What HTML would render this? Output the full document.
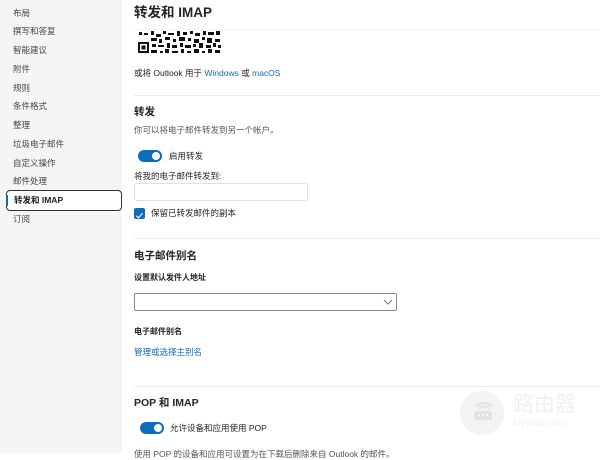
<!DOCTYPE html>
<html><head><meta charset="utf-8"><style>
*{margin:0;padding:0;box-sizing:border-box}
body{width:600px;height:453px;overflow:hidden;background:#fff;font-family:"Liberation Sans","Noto Sans CJK SC",sans-serif;color:#242424;position:relative}
.sb{position:absolute;left:0;top:0;width:122px;height:453px;background:#f5f5f5}
.sb .it{position:absolute;left:13px;font-size:8.5px;color:#444;line-height:12px}
.sb .sel{position:absolute;left:6px;top:190px;width:116px;height:21px;border:1.5px solid #333;border-radius:4px;background:#fff}
.sb .bar{position:absolute;left:6px;top:195px;width:2px;height:11px;background:#0f6cbd}
.t{position:absolute;white-space:nowrap;line-height:12px}
.hr{position:absolute;left:134px;width:466px;height:1px;background:#ececec}
a{color:#0f6cbd;text-decoration:none}
.tog{position:absolute;width:24px;height:12px;border-radius:6px;background:#0f6cbd}
.tog:after{content:"";position:absolute;right:2px;top:2px;width:8px;height:8px;border-radius:50%;background:#fff}
</style></head><body>
<div class="sb">
<div class="it" style="top:7px">布局</div>
<div class="it" style="top:25px">撰写和答复</div>
<div class="it" style="top:44px">智能建议</div>
<div class="it" style="top:63px">附件</div>
<div class="it" style="top:82px">规则</div>
<div class="it" style="top:100px">条件格式</div>
<div class="it" style="top:119px">整理</div>
<div class="it" style="top:138px">垃圾电子邮件</div>
<div class="it" style="top:157px">自定义操作</div>
<div class="it" style="top:175px">邮件处理</div>
<div class="sel"></div><div class="bar"></div>
<div class="it" style="top:194px;left:14px;font-weight:bold;color:#222">转发和 IMAP</div>
<div class="it" style="top:213px">订阅</div>
</div>
<div class="t" style="left:134px;top:5px;font-size:13.5px;font-weight:bold;line-height:16px">转发和 IMAP</div>
<div class="hr" style="top:29px;background:#f3f3f3"></div>
<svg style="position:absolute;left:137px;top:30px" width="86" height="25" viewBox="0 0 86 25">
<rect x="1" y="12" width="11" height="11" fill="#111"/><rect x="3" y="14" width="7" height="7" fill="#fff"/><rect x="4.5" y="15.5" width="4" height="4" fill="#111"/>
<g fill="#111">
<rect x="2" y="2" width="3" height="3"/><rect x="7" y="3" width="4" height="2"/><rect x="14" y="1" width="3" height="4"/><rect x="19" y="4" width="5" height="3"/><rect x="26" y="1" width="3" height="3"/><rect x="31" y="3" width="6" height="2"/><rect x="40" y="1" width="3" height="5"/><rect x="46" y="2" width="4" height="3"/><rect x="53" y="1" width="3" height="3"/><rect x="58" y="3" width="5" height="3"/><rect x="66" y="1" width="3" height="4"/><rect x="71" y="2" width="6" height="3"/><rect x="79" y="1" width="4" height="4"/>
<rect x="14" y="8" width="6" height="3"/><rect x="22" y="9" width="3" height="4"/><rect x="28" y="7" width="5" height="3"/><rect x="36" y="9" width="3" height="3"/><rect x="42" y="7" width="6" height="4"/><rect x="51" y="8" width="3" height="3"/><rect x="57" y="9" width="5" height="4"/><rect x="65" y="7" width="3" height="3"/><rect x="70" y="8" width="5" height="5"/><rect x="78" y="9" width="5" height="3"/>
<rect x="15" y="14" width="4" height="3"/><rect x="21" y="15" width="6" height="2"/><rect x="30" y="13" width="3" height="5"/><rect x="35" y="15" width="5" height="3"/><rect x="43" y="13" width="3" height="4"/><rect x="48" y="15" width="6" height="3"/><rect x="56" y="14" width="3" height="3"/><rect x="62" y="13" width="4" height="5"/><rect x="69" y="15" width="5" height="3"/><rect x="76" y="13" width="3" height="4"/><rect x="81" y="15" width="3" height="3"/>
<rect x="14" y="20" width="6" height="3"/><rect x="23" y="21" width="3" height="2"/><rect x="28" y="19" width="4" height="4"/><rect x="35" y="21" width="6" height="2"/><rect x="44" y="19" width="3" height="4"/><rect x="50" y="21" width="4" height="2"/><rect x="57" y="19" width="5" height="4"/><rect x="65" y="21" width="3" height="2"/><rect x="71" y="19" width="4" height="4"/><rect x="78" y="20" width="5" height="3"/>
</g></svg>
<div class="t" style="left:134px;top:67px;font-size:8.5px">或将 Outlook 用于 <a>Windows</a> 或 <a>macOS</a></div>
<div class="hr" style="top:95px"></div>
<div class="t" style="left:134px;top:106px;font-size:10.5px;font-weight:bold">转发</div>
<div class="t" style="left:134px;top:124px;font-size:8.5px;color:#555">你可以将电子邮件转发到另一个帐户。</div>
<div class="tog" style="left:138px;top:150px"></div>
<div class="t" style="left:169px;top:150px;font-size:8.5px">启用转发</div>
<div class="t" style="left:134px;top:170px;font-size:8.5px">将我的电子邮件转发到:</div>
<div style="position:absolute;left:134px;top:183px;width:174px;height:18px;border:1px solid #e0e0e0;border-radius:3px"></div>
<div style="position:absolute;left:134px;top:208px;width:11px;height:11px;background:#0f6cbd;border-radius:2px"><svg width="11" height="11"><path d="M2.5 5.8l2 2 4-4.5" stroke="#fff" stroke-width="1.1" fill="none"/></svg></div>
<div class="t" style="left:151px;top:207px;font-size:8.5px">保留已转发邮件的副本</div>
<div class="hr" style="top:238px"></div>
<div class="t" style="left:134px;top:250px;font-size:10.5px;font-weight:bold">电子邮件别名</div>
<div class="t" style="left:134px;top:272px;font-size:8px;font-weight:bold">设置默认发件人地址</div>
<div style="position:absolute;left:134px;top:293px;width:263px;height:18px;border:1px solid #8a8a8a;border-radius:2px"></div>
<svg style="position:absolute;left:383px;top:298px" width="10" height="8"><path d="M1 2l4 4 4-4" stroke="#777" fill="none"/></svg>
<div class="t" style="left:134px;top:326px;font-size:8px;font-weight:bold">电子邮件别名</div>
<div class="t" style="left:134px;top:346px;font-size:8.5px"><a>管理或选择主别名</a></div>
<div class="hr" style="top:386px"></div>
<div class="t" style="left:134px;top:397px;font-size:10.5px;font-weight:bold">POP 和 IMAP</div>
<div class="tog" style="left:140px;top:422px"></div>
<div class="t" style="left:170px;top:422px;font-size:8.5px">允许设备和应用使用 POP</div>
<div class="t" style="left:134px;top:448px;font-size:8.5px;color:#555">使用 POP 的设备和应用可设置为在下载后删除来自 Outlook 的邮件。</div>
<div style="position:absolute;left:460px;top:391px;width:44px;height:44px;border-radius:50%;background:#f3f3f3"></div>
<svg style="position:absolute;left:470px;top:400px" width="26" height="24"><path d="M9 9a6 6 0 0 1 10 0M6 7a10 10 0 0 1 16 0" stroke="#e2e2e2" stroke-width="2" fill="none"/><rect x="4" y="11" width="18" height="9" rx="2" fill="#e2e2e2"/><circle cx="9" cy="15.5" r="1" fill="#fff"/><circle cx="13" cy="15.5" r="1" fill="#fff"/><circle cx="17" cy="15.5" r="1" fill="#fff"/></svg>
<div class="t" style="left:513px;top:393px;font-size:21px;line-height:24px;color:#f0f0f0">路由器</div>
<div class="t" style="left:513px;top:418px;font-size:10px;color:#f0f0f0">luyouqi.com</div>
</body></html>
